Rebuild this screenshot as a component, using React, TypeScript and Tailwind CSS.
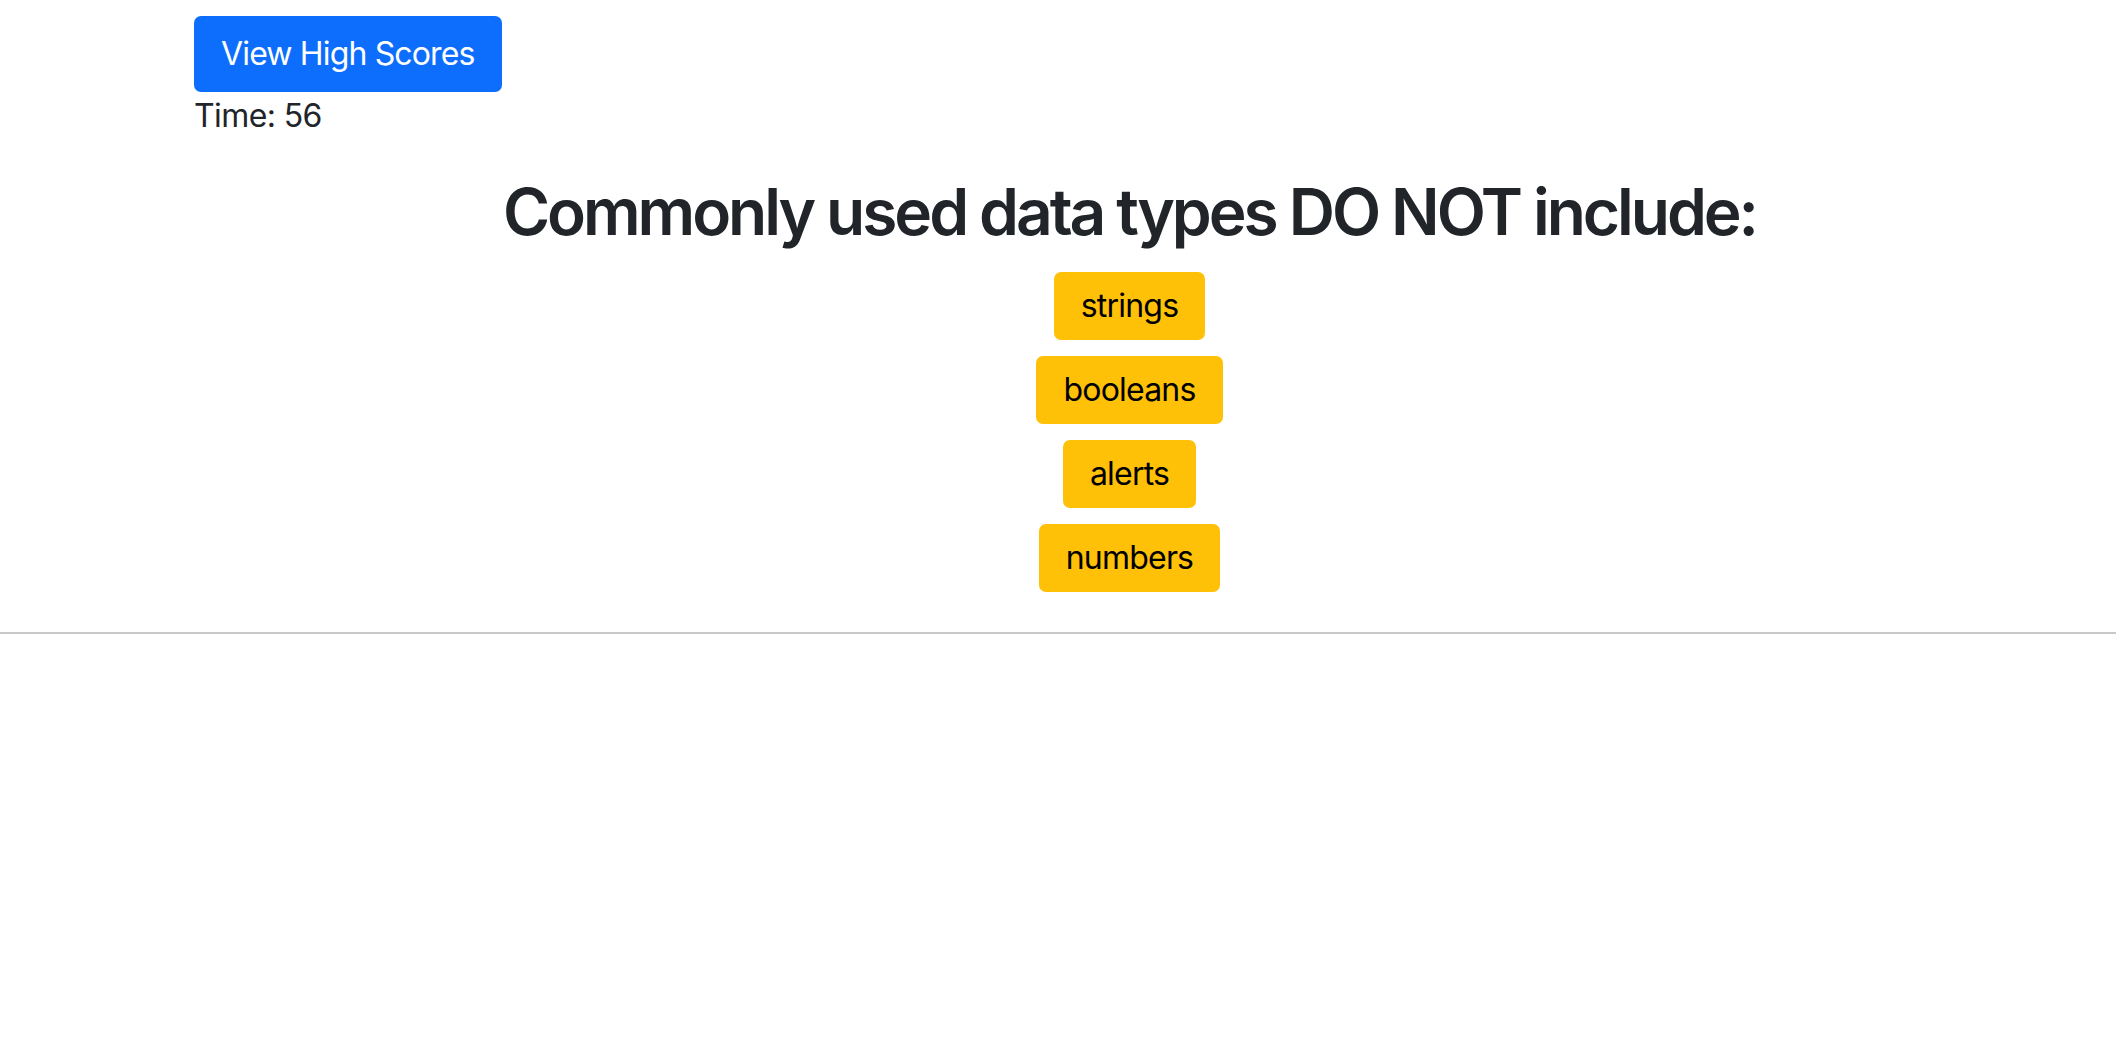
const answers = ['strings', 'booleans', 'alerts', 'numbers'];

export default function App() {
  return (
    <div className="min-h-screen bg-white text-[#212529] font-['Inter','Liberation_Sans',sans-serif]">
      <div className="pl-[194px] pr-[51px] pt-4">
        <button className="h-[76px] rounded-[7px] bg-[#0d6efd] px-[27px] text-[32px] leading-[48px] tracking-[-0.85px] text-white">
          View High Scores
        </button>
        <div className="text-[32px] leading-[48px] tracking-[-0.6px]">Time: 56</div>

        <h2 className="mt-[33px] mb-[22px] text-center text-[64px] font-semibold leading-[77px] tracking-[-3.05px]">
          Commonly used data types DO NOT include:
        </h2>

        <div className="flex flex-col items-center gap-4">
          {answers.map((a) => (
            <button
              key={a}
              className="h-[68px] rounded-[7px] bg-[#ffc107] px-[27px] text-[32px] leading-[48px] tracking-[-0.8px] text-black"
            >
              {a}
            </button>
          ))}
        </div>
      </div>
      <hr className="mt-10 border-0 border-t-2 border-[#c8c9ca]" />
    </div>
  );
}
